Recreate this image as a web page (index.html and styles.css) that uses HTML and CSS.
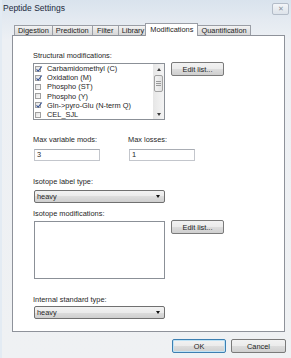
FILE: index.html
```html
<!DOCTYPE html>
<html>

<head>
    <title>Peptide Settings</title>
    <meta charset='utf-8' />
    <link rel="stylesheet" href="styles.css">
</head>

<body>
    <div class="window">
        <div class="titlebar">
            <span class="title">Peptide Settings</span>
            <span class="close">✕</span>
        </div>

        <div class="tabs">
            <div class="tab">Digestion</div>
            <div class="tab">Prediction</div>
            <div class="tab tab-min">Filter</div>
            <div class="tab tab-min">Library</div>
            <div class="tab active">Modifications</div>
            <div class="tab">Quantification</div>
        </div>

        <div class="panel">
            <div class="field-label">Structural modifications:</div>
            <div class="list-row">
                <div class="listbox">
                    <div class="items">
                        <div class="item"><span class="check on"><svg viewBox="0 0 8 8"><path d="M1.5 4.3 L3.2 6.2 L6.8 1.5" /></svg></span>Carbamidomethyl (C)</div>
                        <div class="item"><span class="check on"><svg viewBox="0 0 8 8"><path d="M1.5 4.3 L3.2 6.2 L6.8 1.5" /></svg></span>Oxidation (M)</div>
                        <div class="item"><span class="check"></span>Phospho (ST)</div>
                        <div class="item"><span class="check"></span>Phospho (Y)</div>
                        <div class="item"><span class="check on"><svg viewBox="0 0 8 8"><path d="M1.5 4.3 L3.2 6.2 L6.8 1.5" /></svg></span>Gln-&gt;pyro-Glu (N-term Q)</div>
                        <div class="item"><span class="check"></span>CEL_SJL</div>
                    </div>
                    <div class="scrollbar">
                        <div class="arrow"><span class="tri-up"></span></div>
                        <div class="thumb"><span></span><span></span><span></span></div>
                        <div class="track"></div>
                        <div class="arrow"><span class="tri-down"></span></div>
                    </div>
                </div>
                <button class="btn">Edit list...</button>
            </div>

            <div class="pair">
                <div class="col">
                    <div class="field-label">Max variable mods:</div>
                    <div class="textbox">3</div>
                </div>
                <div class="col">
                    <div class="field-label">Max losses:</div>
                    <div class="textbox">1</div>
                </div>
            </div>

            <div class="field-label gap-label">Isotope label type:</div>
            <div class="combo"><span>heavy</span><span class="tri-down"></span></div>

            <div class="field-label mods-label">Isotope modifications:</div>
            <div class="list-row">
                <div class="listbox tall"></div>
                <button class="btn">Edit list...</button>
            </div>

            <div class="field-label gap-label">Internal standard type:</div>
            <div class="combo combo-last"><span>heavy</span><span class="tri-down"></span></div>
        </div>

        <div class="actions">
            <button class="btn btn-default">OK</button>
            <button class="btn btn-wide">Cancel</button>
        </div>
    </div>
</body>

</html>
```

FILE: styles.css
```css
body {
    margin: 0;
    font-family: "Liberation Sans", Arial, sans-serif;
    font-size: 7.4px;
    color: #262626;
}

.window {
    width: 291px;
    height: 358px;
    overflow: hidden;
    box-sizing: border-box;
    border-left: 2px solid #e3ebf3;
    background: linear-gradient(#d9e3ed 0, #e4eaf1 20px, #edf0f4 40px, #eff1f3 100%);
}

.titlebar {
    height: 23px;
    display: flex;
    justify-content: space-between;
    align-items: flex-start;
}

.title {
    font-size: 8.5px;
    line-height: 10px;
    margin: 3px 0 0 1px;
    color: #1c2a40;
}

.close {
    width: 15px;
    height: 10px;
    margin: 3px 2px 0 0;
    border: 1px solid #b3bcc8;
    border-radius: 2px;
    background: linear-gradient(#f3f5f8, #dde3ea);
    color: #8a929c;
    font-size: 7px;
    line-height: 10px;
    text-align: center;
}

/* tab strip */
.tabs {
    display: flex;
    align-items: flex-end;
    margin-left: 12px;
    height: 12px;
}

.tab {
    height: 10px;
    line-height: 10px;
    padding: 0 3px;
    box-sizing: border-box;
    text-align: center;
    border: 1px solid #9a9ea6;
    border-bottom: none;
    margin-right: -1px;
    background: linear-gradient(#f4f4f4, #e3e3e3 50%, #d8d8d8);
    color: #222;
}

.tab-min {
    min-width: 27px;
}

.tab.active {
    position: relative;
    z-index: 1;
    height: 13px;
    line-height: 11px;
    margin: 0 -1px -1px -2px;
    padding: 0 4px;
    background: #fff;
}

.panel {
    margin-left: 10px;
    width: 273px;
    height: 297px;
    box-sizing: border-box;
    border: 1px solid #8e929a;
    background: #fff;
    padding: 15px 0 0 20px;
}

.field-label {
    line-height: 9px;
    height: 9px;
}

.list-row {
    display: flex;
    align-items: flex-start;
    margin-top: 3px;
}

.listbox {
    width: 132px;
    height: 57px;
    box-sizing: border-box;
    border: 1px solid #8b9097;
    background: #fff;
    display: flex;
}

.listbox.tall {
    height: 58px;
    margin-left: 1px;
    width: 131px;
}

.items {
    flex: 1;
}

.item {
    height: 9.2px;
    line-height: 9.2px;
    display: flex;
    align-items: center;
    white-space: nowrap;
}

.check {
    width: 6px;
    height: 6px;
    margin: 0 6px 0 1px;
    border: 1px solid #a0a0a0;
    box-sizing: border-box;
    background: linear-gradient(135deg, #e2e2e2, #fafafa);
    position: relative;
}

.check svg {
    position: absolute;
    left: -1px;
    top: -2px;
    width: 8px;
    height: 8px;
    fill: none;
    stroke: #3b5796;
    stroke-width: 1.1;
}

.scrollbar {
    width: 11px;
    display: flex;
    flex-direction: column;
    background: linear-gradient(90deg, #e6e6e6, #f4f4f4);
}

.arrow {
    height: 10px;
    display: flex;
    align-items: center;
    justify-content: center;
}

.tri-up,
.tri-down {
    width: 0;
    height: 0;
    border-left: 2.5px solid transparent;
    border-right: 2.5px solid transparent;
}

.tri-up {
    border-bottom: 3px solid #3c3c3c;
}

.tri-down {
    border-top: 3px solid #3c3c3c;
}

.thumb {
    height: 17px;
    margin: 1px 1px 0;
    box-sizing: border-box;
    border: 1px solid #a2a2a2;
    border-radius: 2px;
    background: linear-gradient(90deg, #f3f3f3, #e2e2e2);
    display: flex;
    flex-direction: column;
    justify-content: center;
    align-items: center;
    gap: 1px;
}

.thumb span {
    width: 5px;
    height: 1px;
    background: #9a9a9a;
}

.track {
    flex: 1;
}

.btn {
    width: 53px;
    height: 14px;
    margin: -1px 0 0 6px;
    padding: 0;
    box-sizing: border-box;
    border: 1px solid #7a7a7a;
    border-radius: 2px;
    background: linear-gradient(#f2f2f2, #ebebeb 50%, #dddddd 50%, #cfcfcf);
    font-family: inherit;
    font-size: 7.4px;
    color: #222;
}

.pair {
    display: flex;
    margin-top: 15px;
}

.col {
    width: 95px;
}

.textbox {
    width: 66px;
    height: 12px;
    margin: 5px 0 0 1px;
    box-sizing: border-box;
    border: 1px solid #c3c6cc;
    border-top-color: #a9adb4;
    line-height: 10px;
    padding-left: 2px;
}

.gap-label {
    margin-top: 16px;
}

.mods-label {
    margin-top: 6px;
}

.combo {
    width: 131px;
    height: 13px;
    margin: 4px 0 0 1px;
    box-sizing: border-box;
    border: 1px solid #707070;
    border-radius: 2px;
    background: linear-gradient(#f2f2f2, #ebebeb 50%, #dddddd 50%, #cfcfcf);
    display: flex;
    justify-content: space-between;
    align-items: center;
    padding: 0 4px 0 2px;
}

.combo .tri-down {
    border-top-color: #111;
}

.combo-last {
    margin-top: 2px;
}

.actions {
    display: flex;
    justify-content: flex-end;
    gap: 5px;
    margin-top: 7px;
    padding-right: 5px;
}

.actions .btn {
    margin: 0;
    width: 54px;
}

.actions .btn-wide {
    width: 55px;
}

.btn-default {
    border-color: #3c7fb1;
    box-shadow: inset 0 0 0 1px #bfe3f6;
}
```
